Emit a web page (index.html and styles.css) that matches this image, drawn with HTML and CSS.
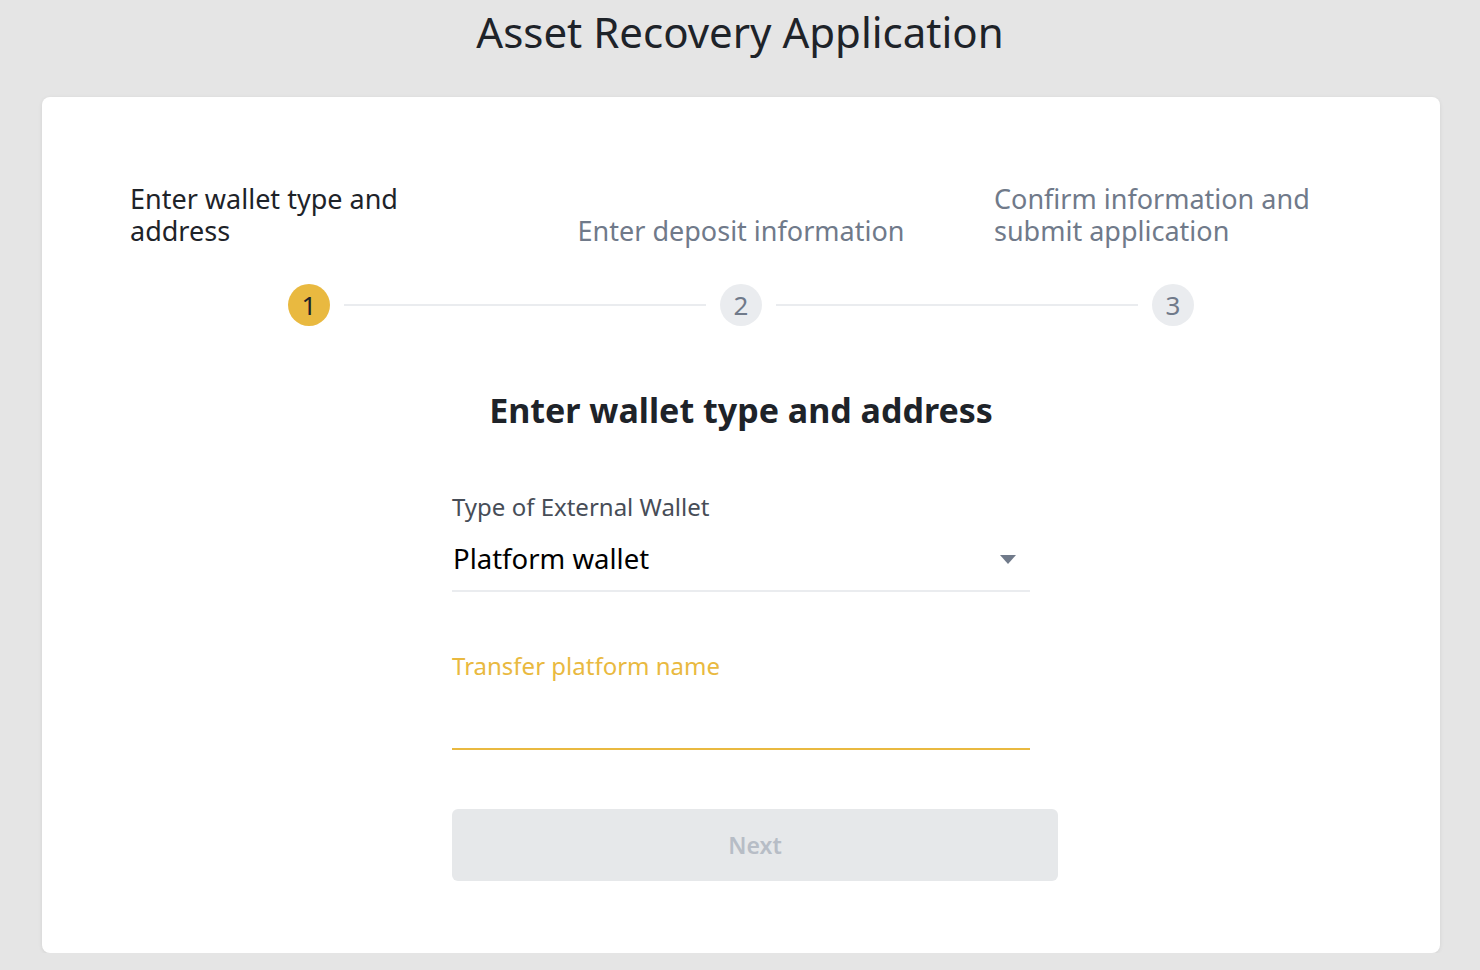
FILE: index.html
```html
<!DOCTYPE html>
<html lang="en">
<head>
    <meta charset="UTF-8">
    <meta name="viewport" content="width=device-width, initial-scale=1.0">
    <title>Asset Recovery Application</title>
    <link rel="stylesheet" href="styles.css">
</head>
<body>
    <h1 class="page-title">Asset Recovery Application</h1>

    <div class="card">
        <div class="steps">
            <div class="step">
                <div class="step-label active">Enter wallet type and address</div>
            </div>
            <div class="step">
                <div class="step-label">Enter deposit information</div>
            </div>
            <div class="step">
                <div class="step-label">Confirm information and submit application</div>
            </div>
        </div>

        <div class="step-track">
            <span class="step-num active">1</span>
            <span class="step-line"></span>
            <span class="step-num">2</span>
            <span class="step-line"></span>
            <span class="step-num">3</span>
        </div>

        <h2 class="form-title">Enter wallet type and address</h2>

        <div class="form">
            <div class="field">
                <div class="field-label">Type of External Wallet</div>
                <div class="select">
                    <span>Platform wallet</span>
                    <svg class="caret" width="16" height="10" viewBox="0 0 16 10">
                        <path d="M0 0h16L8 9z" fill="#707a8a"/>
                    </svg>
                </div>
            </div>

            <div class="field field-focus">
                <div class="field-label">Transfer platform name</div>
                <input class="text-input" type="text">
            </div>

            <button class="btn-next" disabled>Next</button>
        </div>
    </div>
</body>
</html>
```

FILE: styles.css
```css
* {
    box-sizing: border-box;
}

body {
    margin: 0;
    background-color: #e5e5e5;
    font-family: 'Noto Sans', 'Open Sans', sans-serif;
    color: #1e2329;
}

.page-title {
    margin: 0;
    font-size: 42px;
    font-weight: 400;
    line-height: 64px;
    text-align: center;
    color: #1e2329;
}

.card {
    margin: 33px 40px 0 42px;
    height: 856px;
    padding: 86px 51px 0;
    background: #fff;
    border-radius: 8px;
    box-shadow: 0 1px 4px rgba(0, 0, 0, 0.08);
}

.steps {
    display: flex;
    align-items: flex-end;
}

.step {
    flex: 1;
    text-align: center;
}

.step-label {
    display: inline-block;
    max-width: 358px;
    text-align: left;
    font-size: 27px;
    line-height: 32px;
    color: #707a8a;
}

.step-label.active {
    color: #1e2329;
}

.step-track {
    display: flex;
    align-items: center;
    margin: 37px 195px 0;
}

.step-num {
    width: 42px;
    height: 42px;
    border-radius: 50%;
    background: #eaecef;
    color: #707a8a;
    font-size: 26px;
    line-height: 42px;
    text-align: center;
    flex: none;
}

.step-num.active {
    background: #e9b940;
    color: #1e2329;
}

.step-line {
    flex: 1;
    height: 2px;
    margin: 0 14px;
    background: #eaecef;
}

.form-title {
    margin: 62px 0 0;
    font-size: 34px;
    font-weight: 700;
    line-height: 44px;
    text-align: center;
}

.form {
    width: 578px;
    margin: 60px auto 0;
}

.field-label {
    font-size: 24px;
    line-height: 30px;
    color: #474d57;
}

.select {
    display: flex;
    align-items: center;
    justify-content: space-between;
    margin-top: 16px;
    padding: 0 14px 10px 1px;
    height: 54px;
    border-bottom: 2px solid #eaecef;
    font-size: 27.5px;
    line-height: 42px;
    color: #000;
}

.caret {
    margin-top: 2px;
}

.field-focus {
    margin-top: 59px;
}

.field-focus .field-label {
    color: #e9b940;
}

.text-input {
    display: block;
    width: 100%;
    height: 69px;
    border: 0;
    border-bottom: 2px solid #e9b940;
    outline: none;
    font-family: inherit;
    font-size: 25px;
    background: transparent;
}

.btn-next {
    display: block;
    width: calc(100% + 28px);
    height: 72px;
    margin-top: 59px;
    border: 0;
    border-radius: 6px;
    background: #e6e8ea;
    color: #b7bdc6;
    font-family: inherit;
    font-size: 23px;
    font-weight: 600;
}
```
